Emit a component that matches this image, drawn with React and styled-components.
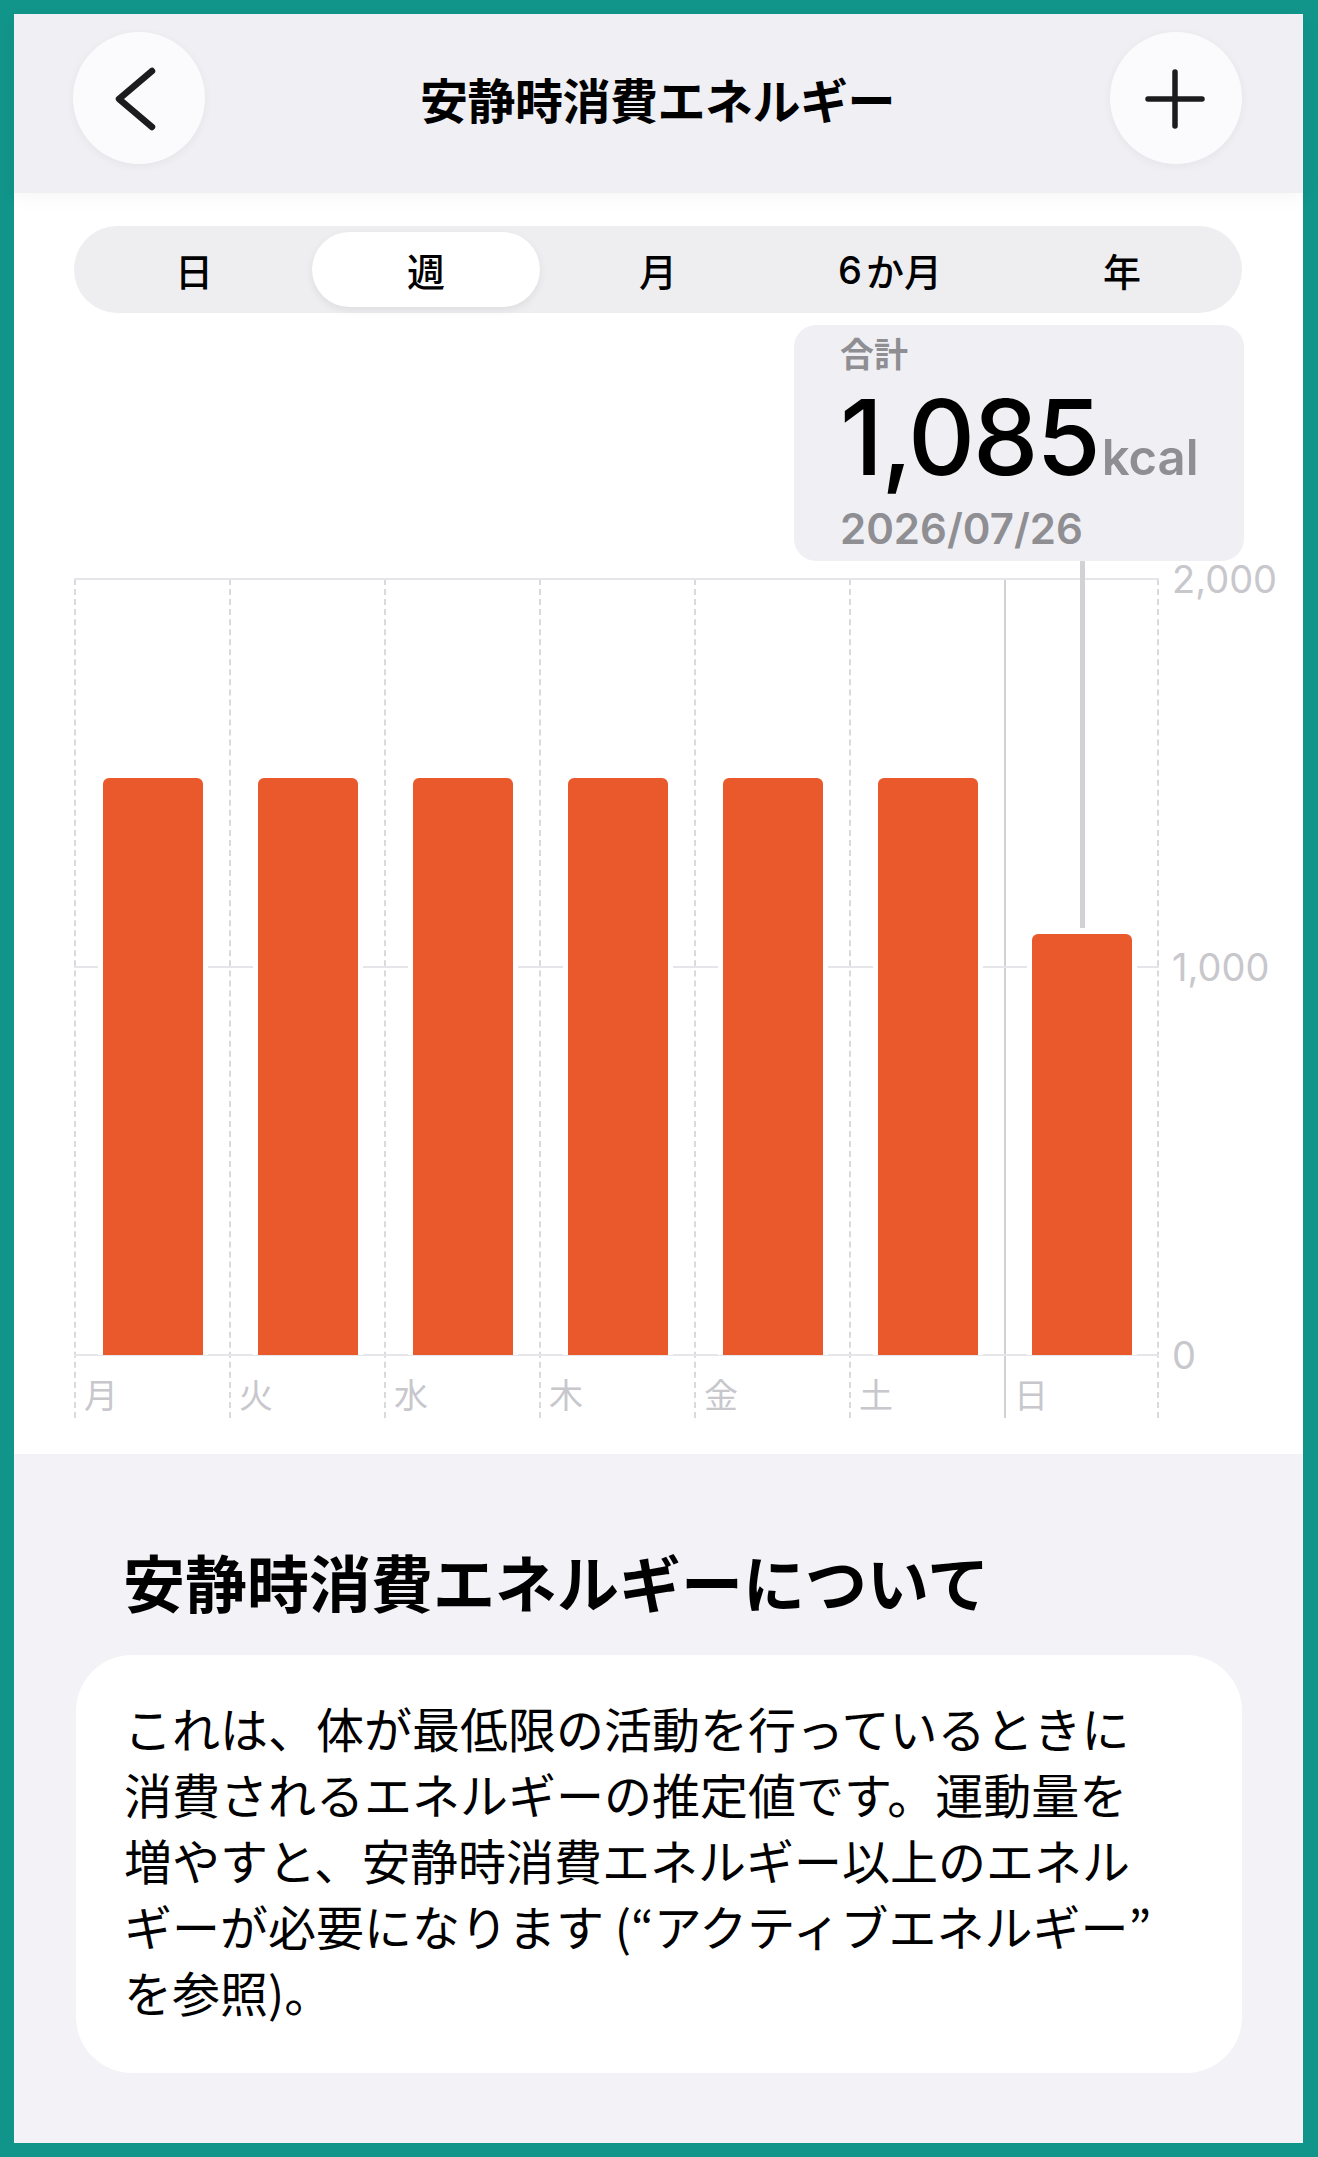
import styled, { createGlobalStyle } from 'styled-components'

const JP = `"Noto Sans CJK JP", "Noto Sans", sans-serif`
const NUM = `Inter, "Noto Sans", sans-serif`

const PLOT_H = 776
const COL_W = 155
const MAX = 2000
const PLOT_TOP = 266

const days = [
  { label: '月', value: 1487 },
  { label: '火', value: 1487 },
  { label: '水', value: 1487 },
  { label: '木', value: 1487 },
  { label: '金', value: 1487 },
  { label: '土', value: 1487 },
  { label: '日', value: 1085 },
]
const selected = 6

const GlobalStyle = createGlobalStyle`
  html, body {
    margin: 0;
    background: #11948a;
  }
  * {
    box-sizing: border-box;
  }
`

const Frame = styled.div`
  width: 1318px;
  min-height: 2157px;
  padding: 14px 15px 14px 14px;
  background: #11948a;
  display: flex;
`

const Screen = styled.div`
  flex: 1;
  min-width: 0;
  display: flex;
  flex-direction: column;
  background: #f2f2f7;
  font-family: ${JP};
  color: #000;
`

const Header = styled.header`
  height: 179px;
  padding: 18px 61px 0 59px;
  display: flex;
  align-items: flex-start;
  background: #efeff4;
  box-shadow: 0 6px 18px rgba(0, 0, 0, 0.035);
  position: relative;
  z-index: 2;
`

const RoundButton = styled.button`
  width: 132px;
  height: 132px;
  border-radius: 50%;
  border: none;
  padding: 0;
  background: #fbfbfd;
  box-shadow: 0 2px 10px rgba(0, 0, 0, 0.05);
  display: flex;
  align-items: center;
  justify-content: center;
  flex: none;
`

const Title = styled.h1`
  flex: 1;
  margin: 0;
  text-align: center;
  font-size: 48px;
  font-weight: 700;
  line-height: 132px;
  letter-spacing: -0.5px;
`

const Main = styled.section`
  background: #fff;
  padding: 33px 61px 36px 60px;
`

const Segmented = styled.div`
  height: 87px;
  border-radius: 44px;
  background: #eeeef0;
  padding: 6px;
  display: grid;
  grid-template-columns: repeat(5, 1fr);
  gap: 4px;
`

const Segment = styled.div`
  border-radius: 38px;
  display: flex;
  align-items: center;
  justify-content: center;
  font-size: 38px;
  font-weight: 500;
  background: ${(p) => (p.$active ? '#fff' : 'transparent')};
  box-shadow: ${(p) => (p.$active ? '0 3px 8px rgba(0,0,0,0.07)' : 'none')};
`

const Digit = styled.span`
  font-family: ${NUM};
  font-weight: 500;
  margin-right: 4px;
`

const ChartArea = styled.div`
  position: relative;
  padding-top: ${PLOT_TOP}px;
  display: flex;
  align-items: flex-start;
`

const Tooltip = styled.div`
  position: absolute;
  top: 12px;
  right: -2px;
  width: 450px;
  padding: 8px 46px 7px;
  border-radius: 22px;
  background: #f0f0f4;
  z-index: 3;
`

const TipLabel = styled.div`
  font-size: 34px;
  font-weight: 700;
  line-height: 40px;
  color: #8e8e93;
`

const TipValue = styled.div`
  margin-top: 14px;
  line-height: 100px;
  white-space: nowrap;
`

const BigNumber = styled.span`
  font-family: ${NUM};
  font-size: 104px;
  font-weight: 500;
  letter-spacing: -2px;
  color: #000;
`

const Unit = styled.span`
  font-family: ${NUM};
  font-size: 49px;
  font-weight: 600;
  color: #8e8e93;
  margin-left: 3px;
`

const TipDate = styled.div`
  margin-top: -14px;
  font-family: ${NUM};
  font-size: 42px;
  font-weight: 600;
  line-height: 50px;
  color: #8e8e93;
`

const Indicator = styled.div`
  position: absolute;
  width: 5px;
  background: #d1d1d6;
  z-index: 2;
`

const Columns = styled.div`
  position: relative;
  display: flex;
  flex: none;
`

const Gridline = styled.div`
  position: absolute;
  left: 0;
  right: 0;
  height: 2px;
  margin-top: -1px;
  background: #e5e5ea;
  z-index: 0;
`

const DayCol = styled.div`
  width: ${COL_W}px;
  display: flex;
  flex-direction: column;
  border-left: 2px ${(p) => (p.$selected ? 'solid #d1d1d6' : 'dashed #dadade')};
  &:last-child {
    border-right: 2px dashed #dadade;
  }
`

const BarSlot = styled.div`
  height: ${PLOT_H}px;
  display: flex;
  align-items: flex-end;
  justify-content: center;
`

const Bar = styled.div`
  position: relative;
  z-index: 1;
  width: 100px;
  background: #e9592c;
  border-radius: 6px 6px 0 0;
  box-shadow: 5px 0 #fff, -5px 0 #fff, 0 -5px #fff;
`

const DayLabel = styled.div`
  height: 63px;
  padding: 19px 0 0 8px;
  font-size: 34px;
  line-height: 40px;
  color: #c7c7cc;
`

const Axis = styled.div`
  flex: none;
  width: 0;
  height: ${PLOT_H}px;
  margin-left: 13px;
  display: flex;
  flex-direction: column;
  justify-content: space-between;
`

const AxisLabel = styled.div`
  height: 0;
  display: flex;
  align-items: center;
  font-family: ${NUM};
  font-size: 38px;
  color: #c7c7cc;
  white-space: nowrap;
`

const About = styled.section`
  flex: 1;
  padding: 91px 61px 70px 62px;
`

const AboutTitle = styled.h2`
  margin: 0 0 38px 47px;
  font-size: 62px;
  font-weight: 700;
  line-height: 72px;
`

const Card = styled.div`
  background: #fff;
  border-radius: 56px;
  padding: 39px 40px 49px 48px;
`

const Body = styled.p`
  margin: 0;
  font-size: 48px;
  line-height: 66px;
  white-space: nowrap;
`

const Chevron = () => (
  <svg width="132" height="132" viewBox="0 0 132 132">
    <path d="M79 39 L46 67 L79 95" fill="none" stroke="#1c1c1e" strokeWidth="6.5" strokeLinecap="round" strokeLinejoin="round" />
  </svg>
)

const Plus = () => (
  <svg width="132" height="132" viewBox="0 0 132 132">
    <path d="M65 40 V94 M38 67 H92" fill="none" stroke="#1c1c1e" strokeWidth="5.5" strokeLinecap="round" />
  </svg>
)

const tabs = ['日', '週', '月', '6か月', '年']

const App = () => {
  const sel = days[selected]
  const barH = (sel.value / MAX) * PLOT_H
  const lineLeft = selected * COL_W + COL_W / 2 - 1.5
  const lineTop = 244
  const lineBottom = PLOT_TOP + PLOT_H - barH - 6

  return (
    <Frame>
      <GlobalStyle />
      <Screen>
        <Header>
          <RoundButton aria-label="戻る"><Chevron /></RoundButton>
          <Title>安静時消費エネルギー</Title>
          <RoundButton aria-label="追加"><Plus /></RoundButton>
        </Header>

        <Main>
          <Segmented>
            {tabs.map((t, i) => (
              <Segment key={t} $active={i === 1}>
                {t === '6か月' ? (<><Digit>6</Digit>か月</>) : t}
              </Segment>
            ))}
          </Segmented>

          <ChartArea>
            <Tooltip>
              <TipLabel>合計</TipLabel>
              <TipValue>
                <BigNumber>1,085</BigNumber>
                <Unit>kcal</Unit>
              </TipValue>
              <TipDate>2026/07/26</TipDate>
            </Tooltip>
            <Indicator style={{ left: lineLeft, top: lineTop, height: lineBottom - lineTop }} />

            <Columns>
              <Gridline style={{ top: 0 }} />
              <Gridline style={{ top: PLOT_H / 2 }} />
              <Gridline style={{ top: PLOT_H }} />
              {days.map((d, i) => (
                <DayCol key={d.label} $selected={i === selected}>
                  <BarSlot>
                    <Bar style={{ height: (d.value / MAX) * PLOT_H }} />
                  </BarSlot>
                  <DayLabel>{d.label}</DayLabel>
                </DayCol>
              ))}
            </Columns>

            <Axis>
              <AxisLabel>2,000</AxisLabel>
              <AxisLabel>1,000</AxisLabel>
              <AxisLabel>0</AxisLabel>
            </Axis>
          </ChartArea>
        </Main>

        <About>
          <AboutTitle>安静時消費エネルギーについて</AboutTitle>
          <Card>
            <Body>
              これは、体が最低限の活動を行っているときに
              <br />
              消費されるエネルギーの推定値です。運動量を
              <br />
              増やすと、安静時消費エネルギー以上のエネル
              <br />
              ギーが必要になります (“アクティブエネルギー”
              <br />
              を参照)。
            </Body>
          </Card>
        </About>
      </Screen>
    </Frame>
  )
}

export default App
